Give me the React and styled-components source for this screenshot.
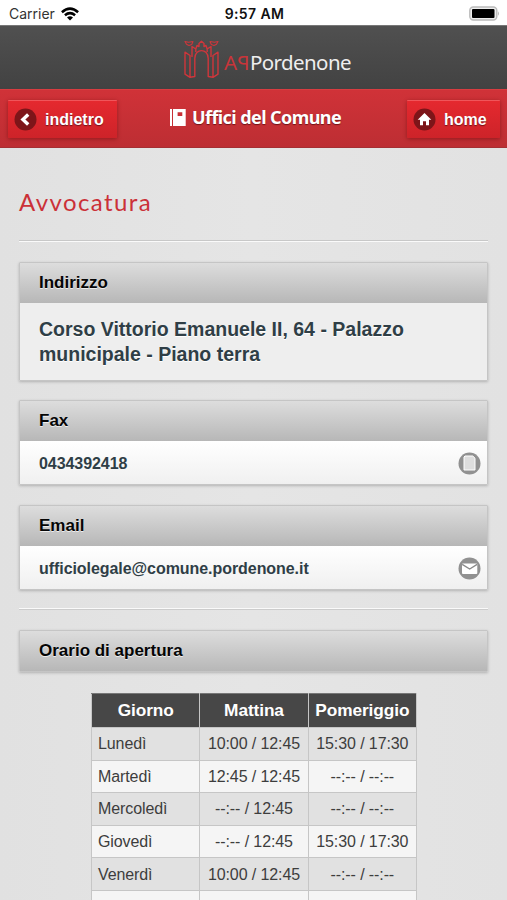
import React from 'react';
import styled, { createGlobalStyle } from 'styled-components';

const GlobalStyle = createGlobalStyle`
  * { box-sizing: border-box; }
  html, body { margin: 0; padding: 0; height: 900px; overflow: hidden; }
  body { font-family: "Liberation Sans", Arial, sans-serif; background: #e4e4e4; }
`;

const Screen = styled.div`
  width: 507px;
  height: 900px;
  overflow: hidden;
  background: linear-gradient(90deg, #e1e1e1, #e5e5e5 50%, #e2e2e2);
`;

const StatusBar = styled.div`
  height: 25px;
  padding: 2px 7px 0 9px;
  background: #fff;
  color: #111;
  display: grid;
  grid-template-columns: 1fr auto 1fr;
  align-items: center;
  font-family: Inter, "Liberation Sans", sans-serif;
  font-size: 14px;
`;

const Carrier = styled.div`
  display: flex;
  align-items: center;
  gap: 6px;
  color: #333;
`;

const Clock = styled.div`
  font-weight: 600;
  letter-spacing: 0.4px;
`;

const BatteryIcon = styled.svg`
  justify-self: end;
  margin-top: -1px;
`;

const BrandBar = styled.header`
  height: 64px;
  padding: 14px 0 0 184px;
  display: flex;
  align-items: flex-start;
  border-top: 1px solid #777;
  background: linear-gradient(#505050, #424242);
`;

const BrandName = styled.div`
  display: flex;
  margin: 8px 0 0 5px;
  font: 400 20.5px/28px "Noto Sans", sans-serif;
  color: #eee;
`;

const BrandPrefix = styled.span`
  width: 26px;
  color: #c9353a;
  white-space: nowrap;
`;

const Mirrored = styled.span`
  display: inline-block;
  transform: scaleX(-1);
`;

const BrandRest = styled.span`
  letter-spacing: -0.6px;
`;

const NavBar = styled.nav`
  height: 59px;
  padding: 10px 7px 0 8px;
  display: grid;
  grid-template-columns: 109px 1fr 93px;
  align-items: start;
  background: linear-gradient(#d03238, #bd2e33);
  border-top: 1px solid #d93c40;
  border-bottom: 1px solid #a52f33;
`;

const NavButton = styled.button`
  height: 38px;
  padding: 1px 0 0 6px;
  display: flex;
  align-items: center;
  gap: 8px;
  border: 0;
  border-top: 1px solid #f0555a;
  border-radius: 1px;
  background: linear-gradient(#e5292f, #cd2329);
  box-shadow: 0 1px 4px rgba(90, 0, 0, 0.45);
  color: #fff;
  font: 700 16px/20px "Liberation Sans", Arial, sans-serif;
  text-shadow: 0 1px 1px #701317;
`;

const NavTitle = styled.h1`
  margin: 6px 0 0 53px;
  display: flex;
  align-items: center;
  gap: 6px;
  color: #fff;
  font: 700 18px/22px "Noto Sans", sans-serif;
  letter-spacing: -0.58px;
  white-space: nowrap;
  text-shadow: 0 1px 1px #701317;
`;

const Content = styled.main`
  padding: 36px 19px 0;
`;

const OfficeName = styled.h2`
  height: 56px;
  margin: 0;
  color: #cb3138;
  font: 400 24px/36px Lato, sans-serif;
  letter-spacing: 1.4px;
`;

const Divider = styled.hr`
  height: 2px;
  margin: 0 0 20px;
  border: 0;
  border-top: 1px solid ${(p) => (p.$raised ? '#fafafa' : '#c8c8c8')};
  border-bottom: 1px solid ${(p) => (p.$raised ? '#cccccc' : '#fafafa')};
`;

const Card = styled.section`
  margin-bottom: ${(p) => p.$gap ?? 20}px;
  border: 1px solid #c5c5c5;
  border-radius: 1px;
  box-shadow: 0 1px 3px rgba(0, 0, 0, 0.22);
`;

const CardHeader = styled.h3`
  height: 40px;
  margin: 0;
  padding: 0 19px;
  background: linear-gradient(#dddddd, #b7b7b7);
  color: #050505;
  font-size: 17px;
  line-height: 39px;
  text-shadow: 0 1px 0 #eee;
`;

const Address = styled.div`
  height: 77px;
  padding: 14px 19px;
  background: #eeeeee;
  color: #2f3e46;
  font: 700 19.5px/24.5px "Liberation Sans", Arial, sans-serif;
  white-space: nowrap;
  text-shadow: 0 1px 0 #fff;
`;

const ContactRow = styled.div`
  height: 43px;
  padding: 2px 6px 0 19px;
  display: flex;
  align-items: center;
  justify-content: space-between;
  background: linear-gradient(#ffffff, #f0f0f0);
  color: #2f3e46;
  font-size: 16px;
  font-weight: 700;
  letter-spacing: -0.06px;
`;

const Hours = styled.table`
  width: 326px;
  margin: 0 0 0 72px;
  table-layout: fixed;
  border-collapse: collapse;
  color: #3d3d3d;
  font-size: 16px;
`;

const HeadCell = styled.th`
  height: 34px;
  padding: 0 0 2px;
  border: 1px solid #c6c6c6;
  border-top-color: #777;
  background: #474747;
  color: #fff;
  font-size: 17.3px;
  line-height: 20px;
  letter-spacing: -0.1px;
`;

const DayRow = styled.tr`
  height: 32.6px;
  background: #e1e1e1;
  &:nth-child(even) { background: #f5f5f5; }
`;

const Cell = styled.td`
  height: 32.6px;
  padding: 1px 0 0;
  border: 1px solid #c6c6c6;
  text-align: center;
  line-height: 20px;
  letter-spacing: -0.1px;
  white-space: pre;
`;

const DayCell = styled(Cell)`
  padding-left: 6px;
  text-align: left;
`;

const WifiIcon = () => (
  <svg width="18" height="14" viewBox="0 0 18 14" fill="none" stroke="#000" strokeWidth="2.5">
    <path d="M.9 5.2Q9-2 17.1 5.2" />
    <path d="M3.9 8.3Q9 4 14.1 8.3" />
    <path d="M9 13.5L6 10.5Q9 8 12 10.5Z" fill="#000" stroke="none" />
  </svg>
);

const Battery = () => (
  <BatteryIcon width="31" height="15" viewBox="0 0 31 15">
    <rect x=".8" y="1" width="27" height="13" rx="3.5" fill="#eee" stroke="#bbb" strokeWidth="1.4" />
    <rect x="3" y="3" width="22.5" height="9" rx="1" fill="#000" />
    <path d="M29 5.2Q31 7.5 29 9.8Z" fill="#bbb" />
  </BatteryIcon>
);

const GateLogo = () => (
  <svg width="35" height="39" viewBox="0 0 35 39" fill="none" stroke="#cf363b" strokeWidth="1.4" strokeLinejoin="round">
    <path d="M1 12.2L6 15.5V37.3L1 34.2ZM6 37.3L10.8 36.5V18.5C10.8 8 24.2 8 24.2 18.5V36.5L29 37.3L34 34.2V12.2L29 15.5V37.3" />
    <path d="M8 17V6.5L11.8 9V12M27 17V6.5L23.2 9V12M11.8 9L13 5.5L15 6.5V3.5L17.5 1.2L20 3.5V6.5L22 5.5L23.2 9" />
    <path d="M1 1.5L4.5 2.2L9 1.5L7.7 4.5L5 5.4L2.5 4.2ZM34 1.5L30.5 2.2L26 1.5L27.3 4.5L30 5.4L32.5 4.2Z" strokeWidth="1.1" />
  </svg>
);

const BackIcon = () => (
  <svg width="23" height="24" viewBox="0 0 23 24">
    <circle cx="11.5" cy="11.5" r="11" fill="#7d1519" />
    <path d="M14.2 6.5L8.9 11.5L14.2 16.5" fill="none" stroke="#fff" strokeWidth="3.4" />
  </svg>
);

const HomeIcon = () => (
  <svg width="23" height="24" viewBox="0 0 23 24">
    <circle cx="11.5" cy="11.5" r="11" fill="#7d1519" />
    <path d="M11.5 5L18.3 11.7H16V17.2H13V13.2H10V17.2H7V11.7H4.7Z" fill="#fff" />
  </svg>
);

const BookIcon = () => (
  <svg width="16" height="19" viewBox="0 0 16 19">
    <path d="M0 1H2V18H0ZM3 1H15.7V18H3ZM7.6 4.2V8H12.3V4.2Z" fill="#fff" fillRule="evenodd" />
  </svg>
);

const FaxIcon = () => (
  <svg width="23" height="23" viewBox="0 0 23 23">
    <circle cx="11.5" cy="11.5" r="11" fill="#919191" />
    <path d="M7 4H14.8L17 6.2V18H6V5Z" fill="#dedede" stroke="#fff" strokeWidth="1" />
  </svg>
);

const MailIcon = () => (
  <svg width="23" height="23" viewBox="0 0 23 23">
    <circle cx="11.5" cy="11.5" r="11" fill="#919191" />
    <rect x="4" y="6.5" width="15.3" height="10.5" rx="1" fill="#fff" />
    <path d="M4.2 7.4L11.7 12L19.1 7.4" fill="none" stroke="#8a8a8a" strokeWidth="1.3" />
  </svg>
);

const schedule = [
  ['Lunedì', '10:00 / 12:45', '15:30 / 17:30'],
  ['Martedì', '12:45 / 12:45', '--:-- / --:--'],
  ['Mercoledì', '--:-- / 12:45', '--:-- / --:--'],
  ['Giovedì', '--:-- / 12:45', '15:30 / 17:30'],
  ['Venerdì', '10:00 / 12:45', '--:-- / --:--'],
  ['', '', ''],
];

export default function App() {
  return (
    <>
      <GlobalStyle />
      <Screen>
        <StatusBar>
          <Carrier>Carrier <WifiIcon /></Carrier>
          <Clock>9:57 AM</Clock>
          <Battery />
        </StatusBar>
        <BrandBar>
          <GateLogo />
          <BrandName>
            <BrandPrefix>A<Mirrored>P</Mirrored></BrandPrefix>
            <BrandRest>Pordenone</BrandRest>
          </BrandName>
        </BrandBar>
        <NavBar>
          <NavButton><BackIcon />indietro</NavButton>
          <NavTitle><BookIcon />Uffici del Comune</NavTitle>
          <NavButton><HomeIcon />home</NavButton>
        </NavBar>
        <Content>
          <OfficeName>Avvocatura</OfficeName>
          <Divider />
          <Card $gap={19}>
            <CardHeader>Indirizzo</CardHeader>
            <Address>
              Corso Vittorio Emanuele II, 64 - Palazzo<br />
              municipale - Piano terra
            </Address>
          </Card>
          <Card>
            <CardHeader>Fax</CardHeader>
            <ContactRow>0434392418<FaxIcon /></ContactRow>
          </Card>
          <Card $gap={18}>
            <CardHeader>Email</CardHeader>
            <ContactRow>ufficiolegale@comune.pordenone.it<MailIcon /></ContactRow>
          </Card>
          <Divider $raised />
          <Card $gap={21}>
            <CardHeader>Orario di apertura</CardHeader>
          </Card>
          <Hours>
            <thead>
              <tr>
                <HeadCell>Giorno</HeadCell>
                <HeadCell>Mattina</HeadCell>
                <HeadCell>Pomeriggio</HeadCell>
              </tr>
            </thead>
            <tbody>
              {schedule.map(([day, morning, afternoon], i) => (
                <DayRow key={i}>
                  <DayCell>{day}</DayCell>
                  <Cell>{morning}</Cell>
                  <Cell>{afternoon}</Cell>
                </DayRow>
              ))}
            </tbody>
          </Hours>
        </Content>
      </Screen>
    </>
  );
}
